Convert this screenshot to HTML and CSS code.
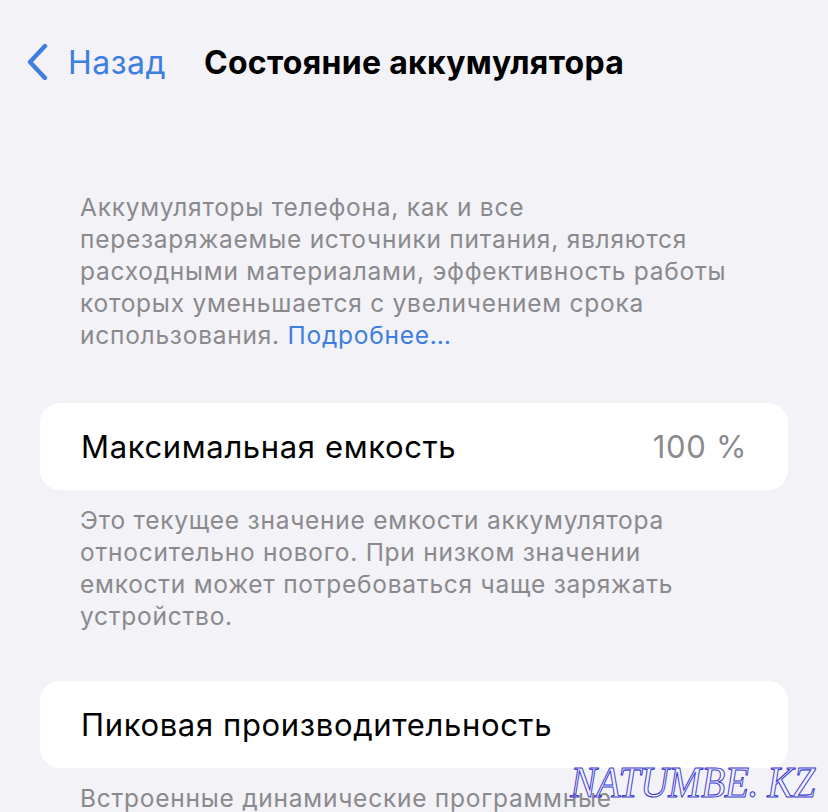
FILE: index.html
```html
<!doctype html>
<html lang="ru">
    <head>
        <meta charset="utf-8">
        <link rel="stylesheet" href="styles.css">
    </head>
    <body>
        <header class="nav">
            <a class="nav-back" href="#">
                <svg class="chevron" width="24" height="38" viewBox="0 0 24 38">
                    <path d="M19 3 L4 19 L19 35" fill="none" stroke="currentColor" stroke-width="4.4" stroke-linecap="round" stroke-linejoin="round"/>
                </svg>
                <span>Назад</span>
            </a>
            <h1 class="nav-title">Состояние аккумулятора</h1>
            <span></span>
        </header>

        <main class="content">
            <p class="note intro">
                Аккумуляторы телефона, как и все<br>
                перезаряжаемые источники питания, являются<br>
                расходными материалами, эффективность работы<br>
                которых уменьшается с увеличением срока<br>
                использования. <a class="more" href="#">Подробнее…</a>
            </p>

            <div class="card">
                <span class="card-label">Максимальная емкость</span>
                <span class="card-value">100 %</span>
            </div>
            <p class="note">
                Это текущее значение емкости аккумулятора<br>
                относительно нового. При низком значении<br>
                емкости может потребоваться чаще заряжать<br>
                устройство.
            </p>

            <div class="card">
                <span class="card-label">Пиковая производительность</span>
            </div>
            <p class="note">
                Встроенные динамические программные
            </p>
        </main>

        <div class="stamp">NATUMBE. KZ</div>
    </body>
</html>
```

FILE: styles.css
```css
html, body {
    margin: 0;
    height: 100%;
    overflow: hidden;
}

body {
    background: #f2f2f7;
    font-family: "Inter", "Liberation Sans", sans-serif;
    color: #000;
    position: relative;
}

a {
    text-decoration: none;
}

/* top navigation bar */
.nav {
    display: grid;
    grid-template-columns: 1fr auto 1fr;
    align-items: center;
    height: 62px;
    padding: 31px 0 0;
}

.nav-back {
    display: flex;
    align-items: center;
    gap: 18px;
    padding-left: 26px;
    color: #3d7ee0;
    font-size: 32px;
    letter-spacing: 0.5px;
}

.chevron {
    display: block;
}

.nav-title {
    margin: 0;
    font-size: 32px;
    font-weight: 700;
    letter-spacing: 0.3px;
}

/* grouped list */
.content {
    padding: 98px 40px 0;
}

.note {
    margin: 0;
    padding: 0 40px;
    font-size: 24.5px;
    line-height: 32px;
    color: #8a8a8e;
    letter-spacing: 0.75px;
}

.intro {
    margin-bottom: 52px;
}

.more {
    color: #3d7ee0;
}

.card {
    display: flex;
    align-items: center;
    justify-content: space-between;
    height: 87px;
    padding: 0 41px;
    background: #fff;
    border-radius: 20px;
    font-size: 31px;
    letter-spacing: 0.65px;
    margin-bottom: 14px;
}

.card + .note {
    margin-bottom: 49px;
}

.card-value {
    color: #8a8a8e;
}

/* watermark over the bottom right corner */
.stamp {
    position: absolute;
    right: 13px;
    top: 760px;
    font-family: "Liberation Serif", serif;
    font-style: italic;
    font-size: 45px;
    line-height: 1;
    color: transparent;
    -webkit-text-stroke: 1.1px #3c3cd2;
    letter-spacing: -0.5px;
    transform: scaleX(0.88);
    transform-origin: right center;
}
```
